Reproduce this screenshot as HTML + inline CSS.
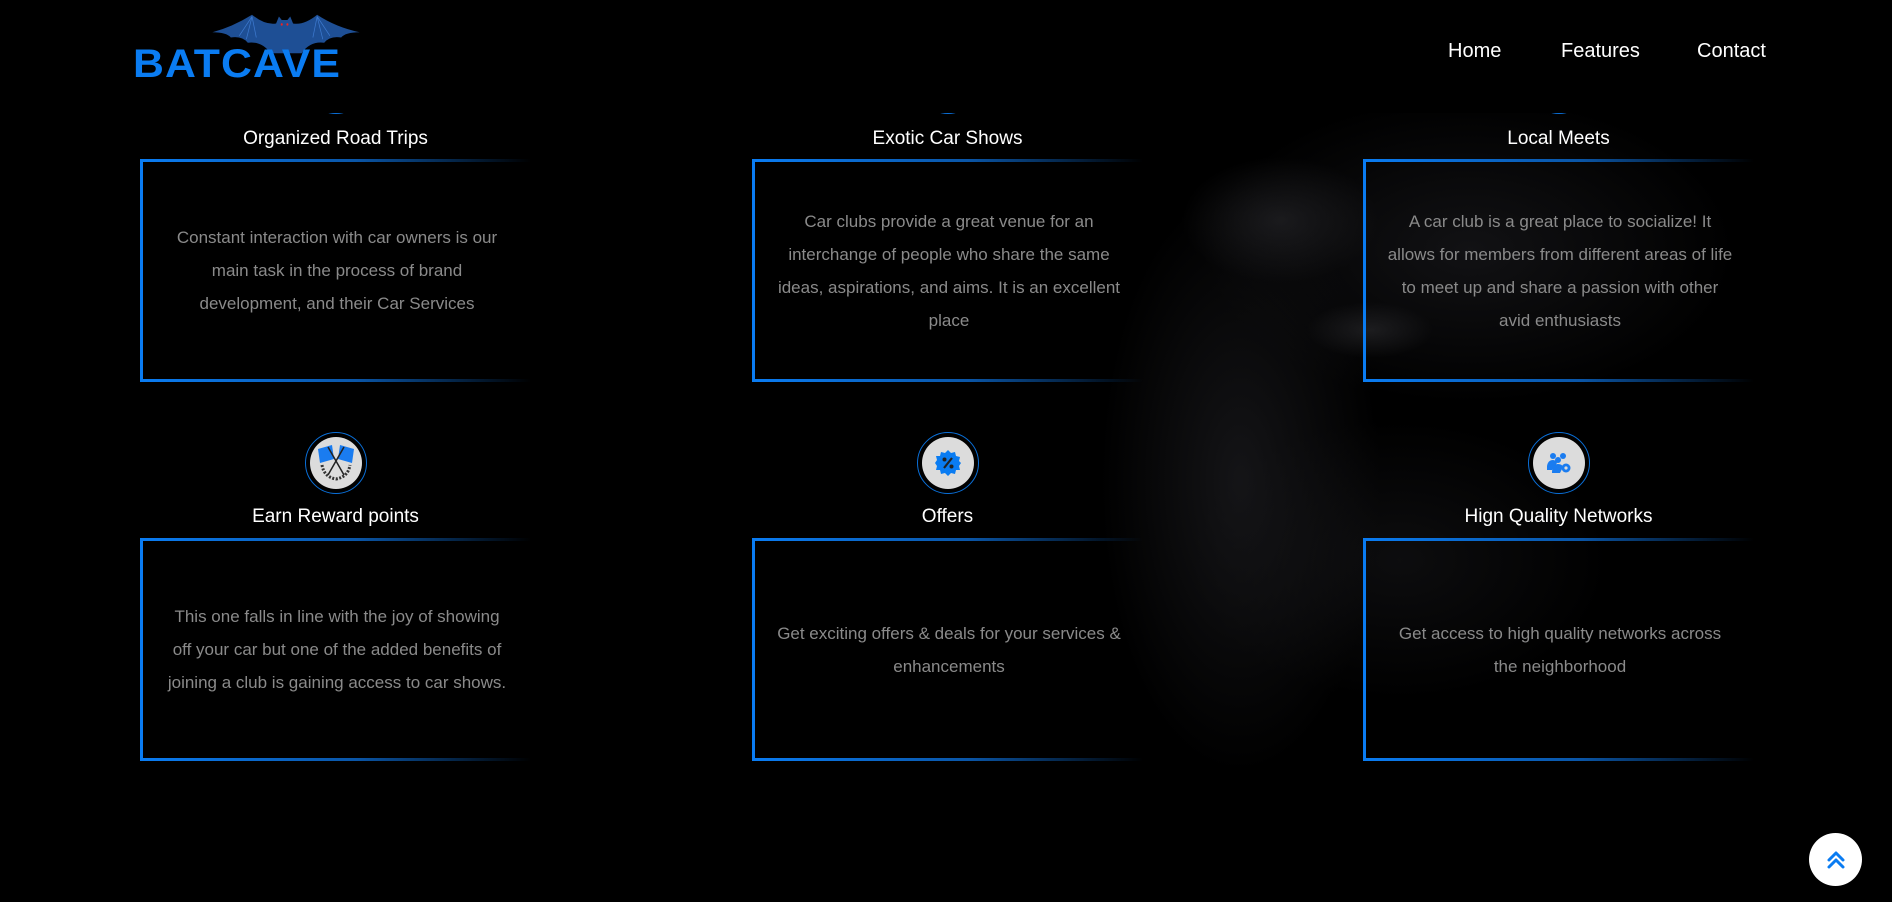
<!DOCTYPE html>
<html><head><meta charset="utf-8">
<style>
*{margin:0;padding:0;box-sizing:border-box}
html,body{width:1892px;height:902px;overflow:hidden;background:#000;font-family:"Liberation Sans",sans-serif}
.bg{position:absolute;inset:0;background:
radial-gradient(ellipse 90px 40px at 1370px 330px,rgba(70,70,75,.35),transparent 70%),
radial-gradient(ellipse 140px 90px at 1280px 220px,rgba(40,40,44,.6),transparent 70%),
radial-gradient(ellipse 200px 420px at 1240px 480px,rgba(24,24,27,.85),transparent 70%),
radial-gradient(ellipse 380px 220px at 1470px 250px,rgba(22,22,25,.8),transparent 70%),
radial-gradient(ellipse 300px 200px at 1400px 560px,rgba(16,16,18,.8),transparent 70%),
#000}
header{position:absolute;left:0;top:0;width:1892px;height:113px;background:#000;z-index:5}
.logo{position:absolute;left:133px;top:0;width:240px;height:90px}
.logo .t{position:absolute;left:0;top:42px;font:900 40px "Liberation Sans",sans-serif;color:#0a7cf2;letter-spacing:1px;transform:scaleX(1.07);transform-origin:left}
nav a{position:absolute;top:40px;color:#fff;font-size:20px;text-decoration:none}
.col{position:absolute;width:391px}
.ic{position:absolute;left:165px;width:62px;height:62px;border-radius:50%;border:1.5px solid #0a6fd8;padding:4px;background:#000}
.ic div{width:100%;height:100%;border-radius:50%;background:#dcdcdc;display:flex;align-items:center;justify-content:center}
.ti{position:absolute;left:0;width:391px;text-align:center;color:#fff;font-size:19px}
.card{position:absolute;left:0;width:391px;height:223px;border-left:3px solid #0a7cf2;display:flex;align-items:center;justify-content:center;padding:0 20px;text-align:center;color:#8a8a8a;font-size:17px;line-height:33px}
.card:before,.card:after{content:"";position:absolute;left:-3px;right:0;height:3px;background:linear-gradient(90deg,#0a7cf2,#0a56a8 55%,rgba(10,60,120,0))}
.card:before{top:0}.card:after{bottom:0}
.up{position:absolute;left:1809px;top:833px;width:53px;height:53px;border-radius:50%;background:#fff;display:flex;align-items:center;justify-content:center;z-index:6}
</style></head><body>
<div class="bg"></div>
<header>
<div class="logo">
<svg width="150" height="42" viewBox="0 0 212 48" preserveAspectRatio="none" style="position:absolute;left:78px;top:13px">
<path d="M2 22 Q30 16 58 2 Q76 14 92 12 L96 4 L100 8 L108 8 L112 4 L116 12 Q132 14 150 2 Q176 16 210 22 Q190 22 184 28 Q168 26 160 34 Q140 32 128 46 L84 46 Q72 32 52 34 Q44 26 28 28 Q22 22 2 22Z" fill="#1e4f95"/>
<path d="M58 4 L50 30 M58 4 L64 28 M58 4 L40 26 M150 4 L158 30 M150 4 L144 28 M150 4 L168 26" stroke="#3d7ad0" stroke-width="1"/>
<circle cx="100" cy="13" r="1.5" fill="#e22"/><circle cx="108" cy="13" r="1.5" fill="#e22"/>
</svg>
<div class="t">BATCAVE</div>
</div>
<nav><a style="left:1448px">Home</a><a style="left:1561px">Features</a><a style="left:1697px">Contact</a></nav>
</header>

<div class="col" style="left:140px;top:0">
<div class="ic" style="top:52px"><div></div></div>
<div class="ti" style="top:128px">Organized Road Trips</div>
<div class="card" style="top:159px">Constant interaction with car owners is our main task in the process of brand development, and their Car Services</div>
<div class="ic" style="top:432px"><div><svg width="44" height="40" viewBox="0 0 44 40"><path d="M4 6 L18 2 L20 16 L6 20Z" fill="#1a7cf0"/><path d="M40 6 L26 2 L24 16 L38 20Z" fill="#1a7cf0"/><path d="M14 4 L30 32 M30 4 L14 32" stroke="#222" stroke-width="1.5"/><path d="M8 22 Q10 34 22 36 Q34 34 36 22" fill="none" stroke="#333" stroke-width="3" stroke-dasharray="2 1.5"/></svg></div></div>
<div class="ti" style="top:506px">Earn Reward points</div>
<div class="card" style="top:538px">This one falls in line with the joy of showing off your car but one of the added benefits of joining a club is gaining access to car shows.</div>
</div>

<div class="col" style="left:752px;top:0">
<div class="ic" style="top:52px"><div></div></div>
<div class="ti" style="top:128px">Exotic Car Shows</div>
<div class="card" style="top:159px">Car clubs provide a great venue for an interchange of people who share the same ideas, aspirations, and aims. It is an excellent place</div>
<div class="ic" style="top:432px"><div><svg width="28" height="28" viewBox="0 0 28 28"><path d="M14 1 L17 4 L21 3 L22 7 L26 8 L25 12 L27 14 L25 17 L26 21 L22 21 L21 25 L17 24 L14 27 L11 24 L7 25 L6 21 L2 21 L3 17 L1 14 L3 11 L2 7 L6 7 L7 3 L11 4Z" fill="#0a7cf2"/><circle cx="10.5" cy="10.5" r="2" fill="#222"/><circle cx="17.5" cy="17.5" r="2" fill="#222"/><path d="M18 9 L10 19" stroke="#222" stroke-width="2.2"/></svg></div></div>
<div class="ti" style="top:506px">Offers</div>
<div class="card" style="top:538px">Get exciting offers &amp; deals for your services &amp; enhancements</div>
</div>

<div class="col" style="left:1363px;top:0">
<div class="ic" style="top:52px"><div></div></div>
<div class="ti" style="top:128px">Local Meets</div>
<div class="card" style="top:159px">A car club is a great place to socialize! It allows for members from different areas of life to meet up and share a passion with other avid enthusiasts</div>
<div class="ic" style="top:432px"><div><svg width="26" height="22" viewBox="0 0 26 22"><circle cx="7" cy="4" r="3" fill="#1a7cf0"/><circle cx="17" cy="4" r="3" fill="#1a7cf0"/><circle cx="12" cy="8" r="3" fill="#1a7cf0"/><path d="M1 14 Q2 8 7 8 Q10 8 11 11 L6 18 L1 18Z" fill="#1a7cf0"/><path d="M6 21 Q6 12 12 12 Q16 12 17 15 L14 21Z" fill="#1a7cf0"/><circle cx="20" cy="16" r="4.5" fill="#1a7cf0"/><circle cx="20" cy="16" r="1.6" fill="#dcdcdc"/></svg></div></div>
<div class="ti" style="top:506px">Hign Quality Networks</div>
<div class="card" style="top:538px">Get access to high quality networks across the neighborhood</div>
</div>

<div class="up"><svg width="24" height="24" viewBox="0 0 24 24"><path d="M5 12 L12 5 L19 12 M5 19 L12 12 L19 19" fill="none" stroke="#0a7cf2" stroke-width="3" stroke-linecap="round" stroke-linejoin="round"/></svg></div>
</body></html>
